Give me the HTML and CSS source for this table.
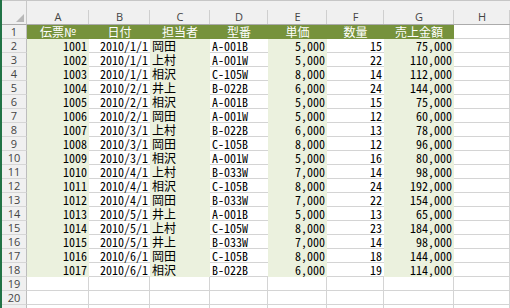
FILE: index.html
```html
<!DOCTYPE html>
<html lang="ja">
<head>
<meta charset="utf-8">
<title>売上一覧</title>
<link rel="stylesheet" href="styles.css">
</head>
<body>
<div class="sheet">
  <div class="corner"><span class="tri"></span></div>
  <div class="colh">A</div><div class="colh">B</div><div class="colh">C</div><div class="colh">D</div><div class="colh">E</div><div class="colh">F</div><div class="colh">G</div><div class="colh">H</div>

  <div class="rowh">1</div>
  <div class="hd">伝票№</div><div class="hd">日付</div><div class="hd">担当者</div><div class="hd">型番</div><div class="hd">単価</div><div class="hd">数量</div><div class="hd">売上金額</div><div class="c"></div>

  <div class="rowh">2</div>
  <div class="g r">1001</div><div class="w r">2010/1/1</div><div class="g">岡田</div><div class="w">A-001B</div><div class="g r">5,000</div><div class="w r">15</div><div class="g r">75,000</div><div class="c"></div>

  <div class="rowh">3</div>
  <div class="g r">1002</div><div class="w r">2010/1/1</div><div class="g">上村</div><div class="w">A-001W</div><div class="g r">5,000</div><div class="w r">22</div><div class="g r">110,000</div><div class="c"></div>

  <div class="rowh">4</div>
  <div class="g r">1003</div><div class="w r">2010/1/1</div><div class="g">相沢</div><div class="w">C-105W</div><div class="g r">8,000</div><div class="w r">14</div><div class="g r">112,000</div><div class="c"></div>

  <div class="rowh">5</div>
  <div class="g r">1004</div><div class="w r">2010/2/1</div><div class="g">井上</div><div class="w">B-022B</div><div class="g r">6,000</div><div class="w r">24</div><div class="g r">144,000</div><div class="c"></div>

  <div class="rowh">6</div>
  <div class="g r">1005</div><div class="w r">2010/2/1</div><div class="g">相沢</div><div class="w">A-001B</div><div class="g r">5,000</div><div class="w r">15</div><div class="g r">75,000</div><div class="c"></div>

  <div class="rowh">7</div>
  <div class="g r">1006</div><div class="w r">2010/2/1</div><div class="g">岡田</div><div class="w">A-001W</div><div class="g r">5,000</div><div class="w r">12</div><div class="g r">60,000</div><div class="c"></div>

  <div class="rowh">8</div>
  <div class="g r">1007</div><div class="w r">2010/3/1</div><div class="g">上村</div><div class="w">B-022B</div><div class="g r">6,000</div><div class="w r">13</div><div class="g r">78,000</div><div class="c"></div>

  <div class="rowh">9</div>
  <div class="g r">1008</div><div class="w r">2010/3/1</div><div class="g">岡田</div><div class="w">C-105B</div><div class="g r">8,000</div><div class="w r">12</div><div class="g r">96,000</div><div class="c"></div>

  <div class="rowh">10</div>
  <div class="g r">1009</div><div class="w r">2010/3/1</div><div class="g">相沢</div><div class="w">A-001W</div><div class="g r">5,000</div><div class="w r">16</div><div class="g r">80,000</div><div class="c"></div>

  <div class="rowh">11</div>
  <div class="g r">1010</div><div class="w r">2010/4/1</div><div class="g">上村</div><div class="w">B-033W</div><div class="g r">7,000</div><div class="w r">14</div><div class="g r">98,000</div><div class="c"></div>

  <div class="rowh">12</div>
  <div class="g r">1011</div><div class="w r">2010/4/1</div><div class="g">相沢</div><div class="w">C-105B</div><div class="g r">8,000</div><div class="w r">24</div><div class="g r">192,000</div><div class="c"></div>

  <div class="rowh">13</div>
  <div class="g r">1012</div><div class="w r">2010/4/1</div><div class="g">岡田</div><div class="w">B-033W</div><div class="g r">7,000</div><div class="w r">22</div><div class="g r">154,000</div><div class="c"></div>

  <div class="rowh">14</div>
  <div class="g r">1013</div><div class="w r">2010/5/1</div><div class="g">井上</div><div class="w">A-001B</div><div class="g r">5,000</div><div class="w r">13</div><div class="g r">65,000</div><div class="c"></div>

  <div class="rowh">15</div>
  <div class="g r">1014</div><div class="w r">2010/5/1</div><div class="g">上村</div><div class="w">C-105W</div><div class="g r">8,000</div><div class="w r">23</div><div class="g r">184,000</div><div class="c"></div>

  <div class="rowh">16</div>
  <div class="g r">1015</div><div class="w r">2010/5/1</div><div class="g">井上</div><div class="w">B-033W</div><div class="g r">7,000</div><div class="w r">14</div><div class="g r">98,000</div><div class="c"></div>

  <div class="rowh">17</div>
  <div class="g r">1016</div><div class="w r">2010/6/1</div><div class="g">岡田</div><div class="w">C-105B</div><div class="g r">8,000</div><div class="w r">18</div><div class="g r">144,000</div><div class="c"></div>

  <div class="rowh">18</div>
  <div class="g r">1017</div><div class="w r">2010/6/1</div><div class="g">相沢</div><div class="w">B-022B</div><div class="g r">6,000</div><div class="w r">19</div><div class="g r">114,000</div><div class="c"></div>

  <div class="rowh">19</div>
  <div class="c"></div><div class="c"></div><div class="c"></div><div class="c"></div><div class="c"></div><div class="c"></div><div class="c"></div><div class="c"></div>

  <div class="rowh">20</div>
  <div class="c"></div><div class="c"></div><div class="c"></div><div class="c"></div><div class="c"></div><div class="c"></div><div class="c"></div><div class="c"></div>

  <div class="rowh"></div>
  <div class="c"></div><div class="c"></div><div class="c"></div><div class="c"></div><div class="c"></div><div class="c"></div><div class="c"></div><div class="c"></div>
</div>
</body>
</html>
```

FILE: styles.css
```css
html, body {
  margin: 0;
  padding: 0;
  background: #ffffff;
  overflow: hidden;
}

body {
  width: 510px;
  height: 308px;
}

.sheet {
  display: grid;
  grid-template-columns: 25px 62px 61px 60px 58px 59px 57px 70px 1fr;
  grid-template-rows: 25px;
  grid-auto-rows: 14px;
  border-left: 2px solid #217346;
  height: 308px;
  overflow: hidden;
  box-sizing: border-box;
  font-family: "Noto Sans CJK JP", "Noto Sans", sans-serif;
  font-size: 12px;
  font-feature-settings: "hwid" 1;
  color: #000000;
}

.sheet > div {
  box-sizing: border-box;
  line-height: 13px;
  white-space: nowrap;
  padding: 0 2px;
}

.corner {
  position: relative;
  background: #f0f0f0;
  border-top: 1px solid #c6c6c6;
  border-right: 1px solid #c8c8c8;
  border-bottom: 1px solid #ababab;
}

.tri {
  position: absolute;
  right: 2px;
  bottom: 2px;
  width: 0;
  height: 0;
  border-left: 8px solid transparent;
  border-bottom: 8px solid #b8b8b8;
}

.colh {
  background:
    linear-gradient(#cfcfcf, #cfcfcf) right bottom / 1px 14px no-repeat,
    #f0f0f0;
  border-top: 1px solid #c6c6c6;
  border-bottom: 1px solid #ababab;
  font-family: "Open Sans", "Noto Sans", sans-serif;
  font-size: 11px;
  color: #444444;
  text-align: center;
  padding-top: 9px !important;
}

.rowh {
  background: #f0f0f0;
  border-right: 1px solid #bdbdbd;
  border-bottom: 1px solid #d6d6d6;
  font-family: "Open Sans", "Noto Sans", sans-serif;
  font-size: 11px;
  color: #444444;
  text-align: center;
  padding: 0 !important;
}

.hd {
  background: #76923c;
  color: #ffffff;
  text-align: center;
}

.g {
  background: #ebf1de;
}

.w {
  background: #ffffff;
  border-bottom: 1px solid #d4d4d4;
}

.c {
  background: #ffffff;
  border-right: 1px solid #d4d4d4;
  border-bottom: 1px solid #d4d4d4;
}

.r {
  text-align: right;
}
```
